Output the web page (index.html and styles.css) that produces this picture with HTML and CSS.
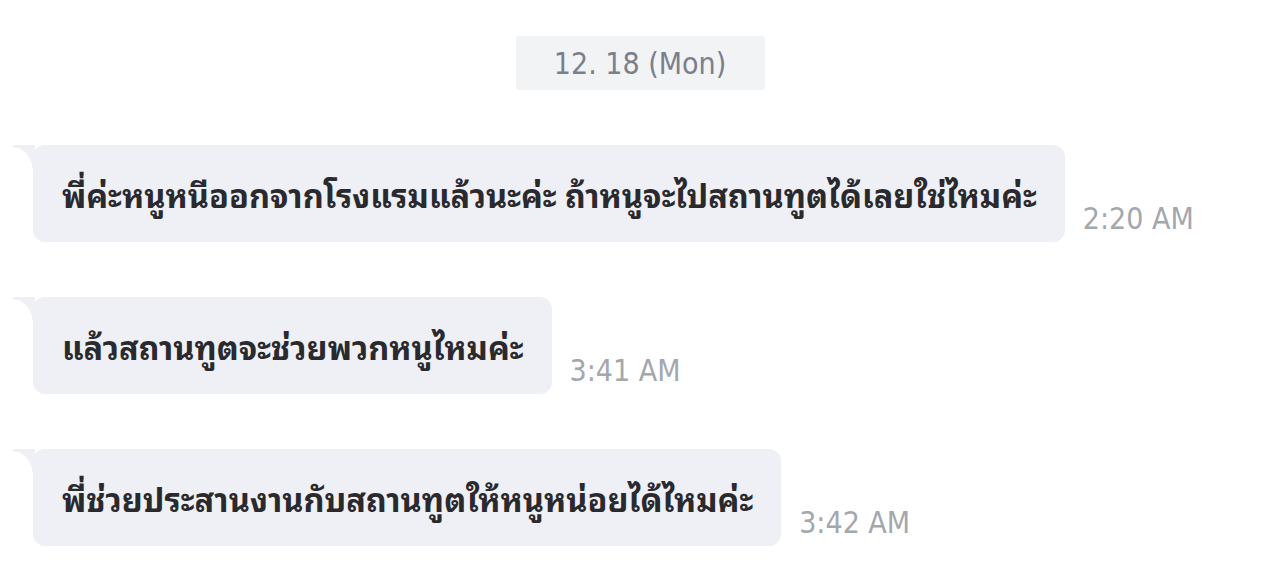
FILE: index.html
```html
<!DOCTYPE html>
<html lang="th">
<head>
<meta charset="utf-8">
<title>Chat</title>
<link rel="stylesheet" href="styles.css">
</head>
<body>
<div class="chat">
  <div class="date-row"><span class="date">12. 18 (Mon)</span></div>
  <div class="msg">
    <div class="bubble">พี่ค่ะหนูหนีออกจากโรงแรมแล้วนะค่ะ ถ้าหนูจะไปสถานทูตได้เลยใช่ไหมค่ะ</div>
    <span class="time">2:20 AM</span>
  </div>
  <div class="msg">
    <div class="bubble">แล้วสถานทูตจะช่วยพวกหนูไหมค่ะ</div>
    <span class="time">3:41 AM</span>
  </div>
  <div class="msg">
    <div class="bubble">พี่ช่วยประสานงานกับสถานทูตให้หนูหน่อยได้ไหมค่ะ</div>
    <span class="time">3:42 AM</span>
  </div>
</div>
</body>
</html>
```
FILE: styles.css
```css
html, body {
  margin: 0;
  padding: 0;
  background: #ffffff;
}
.chat {
  display: flex;
  flex-direction: column;
  padding: 36px 0 0 33px;
  font-family: "DejaVu Sans Condensed", "DejaVu Sans", "Noto Sans Thai Looped", sans-serif;
}
.date-row {
  display: flex;
  justify-content: center;
  padding-right: 33px;
}
.date {
  display: flex;
  align-items: center;
  justify-content: center;
  width: 249px;
  height: 54px;
  background: #f2f3f5;
  border-radius: 3px;
  color: #7a808b;
  font-size: 30px;
}
.msg {
  display: flex;
  align-items: flex-end;
  margin-top: 55px;
}
.bubble {
  position: relative;
  background: #eef0f5;
  border-radius: 12px;
  height: 97px;
  box-sizing: border-box;
  padding: 0 28px 2px 29px;
  display: flex;
  align-items: center;
  color: #2a2a2e;
  font-family: "Noto Sans Thai Looped", "DejaVu Sans", sans-serif;
  font-size: 32.5px;
  font-weight: bold;
  white-space: nowrap;
}
.bubble::before {
  content: "";
  position: absolute;
  left: -20px;
  top: 0;
  width: 22px;
  height: 26px;
  background: radial-gradient(ellipse 20px 24px at 0 100%, transparent 97%, #eef0f5 100%);
}
.time {
  margin: 0 0 6px 18px;
  color: #a3a7ae;
  font-size: 30px;
}
```
